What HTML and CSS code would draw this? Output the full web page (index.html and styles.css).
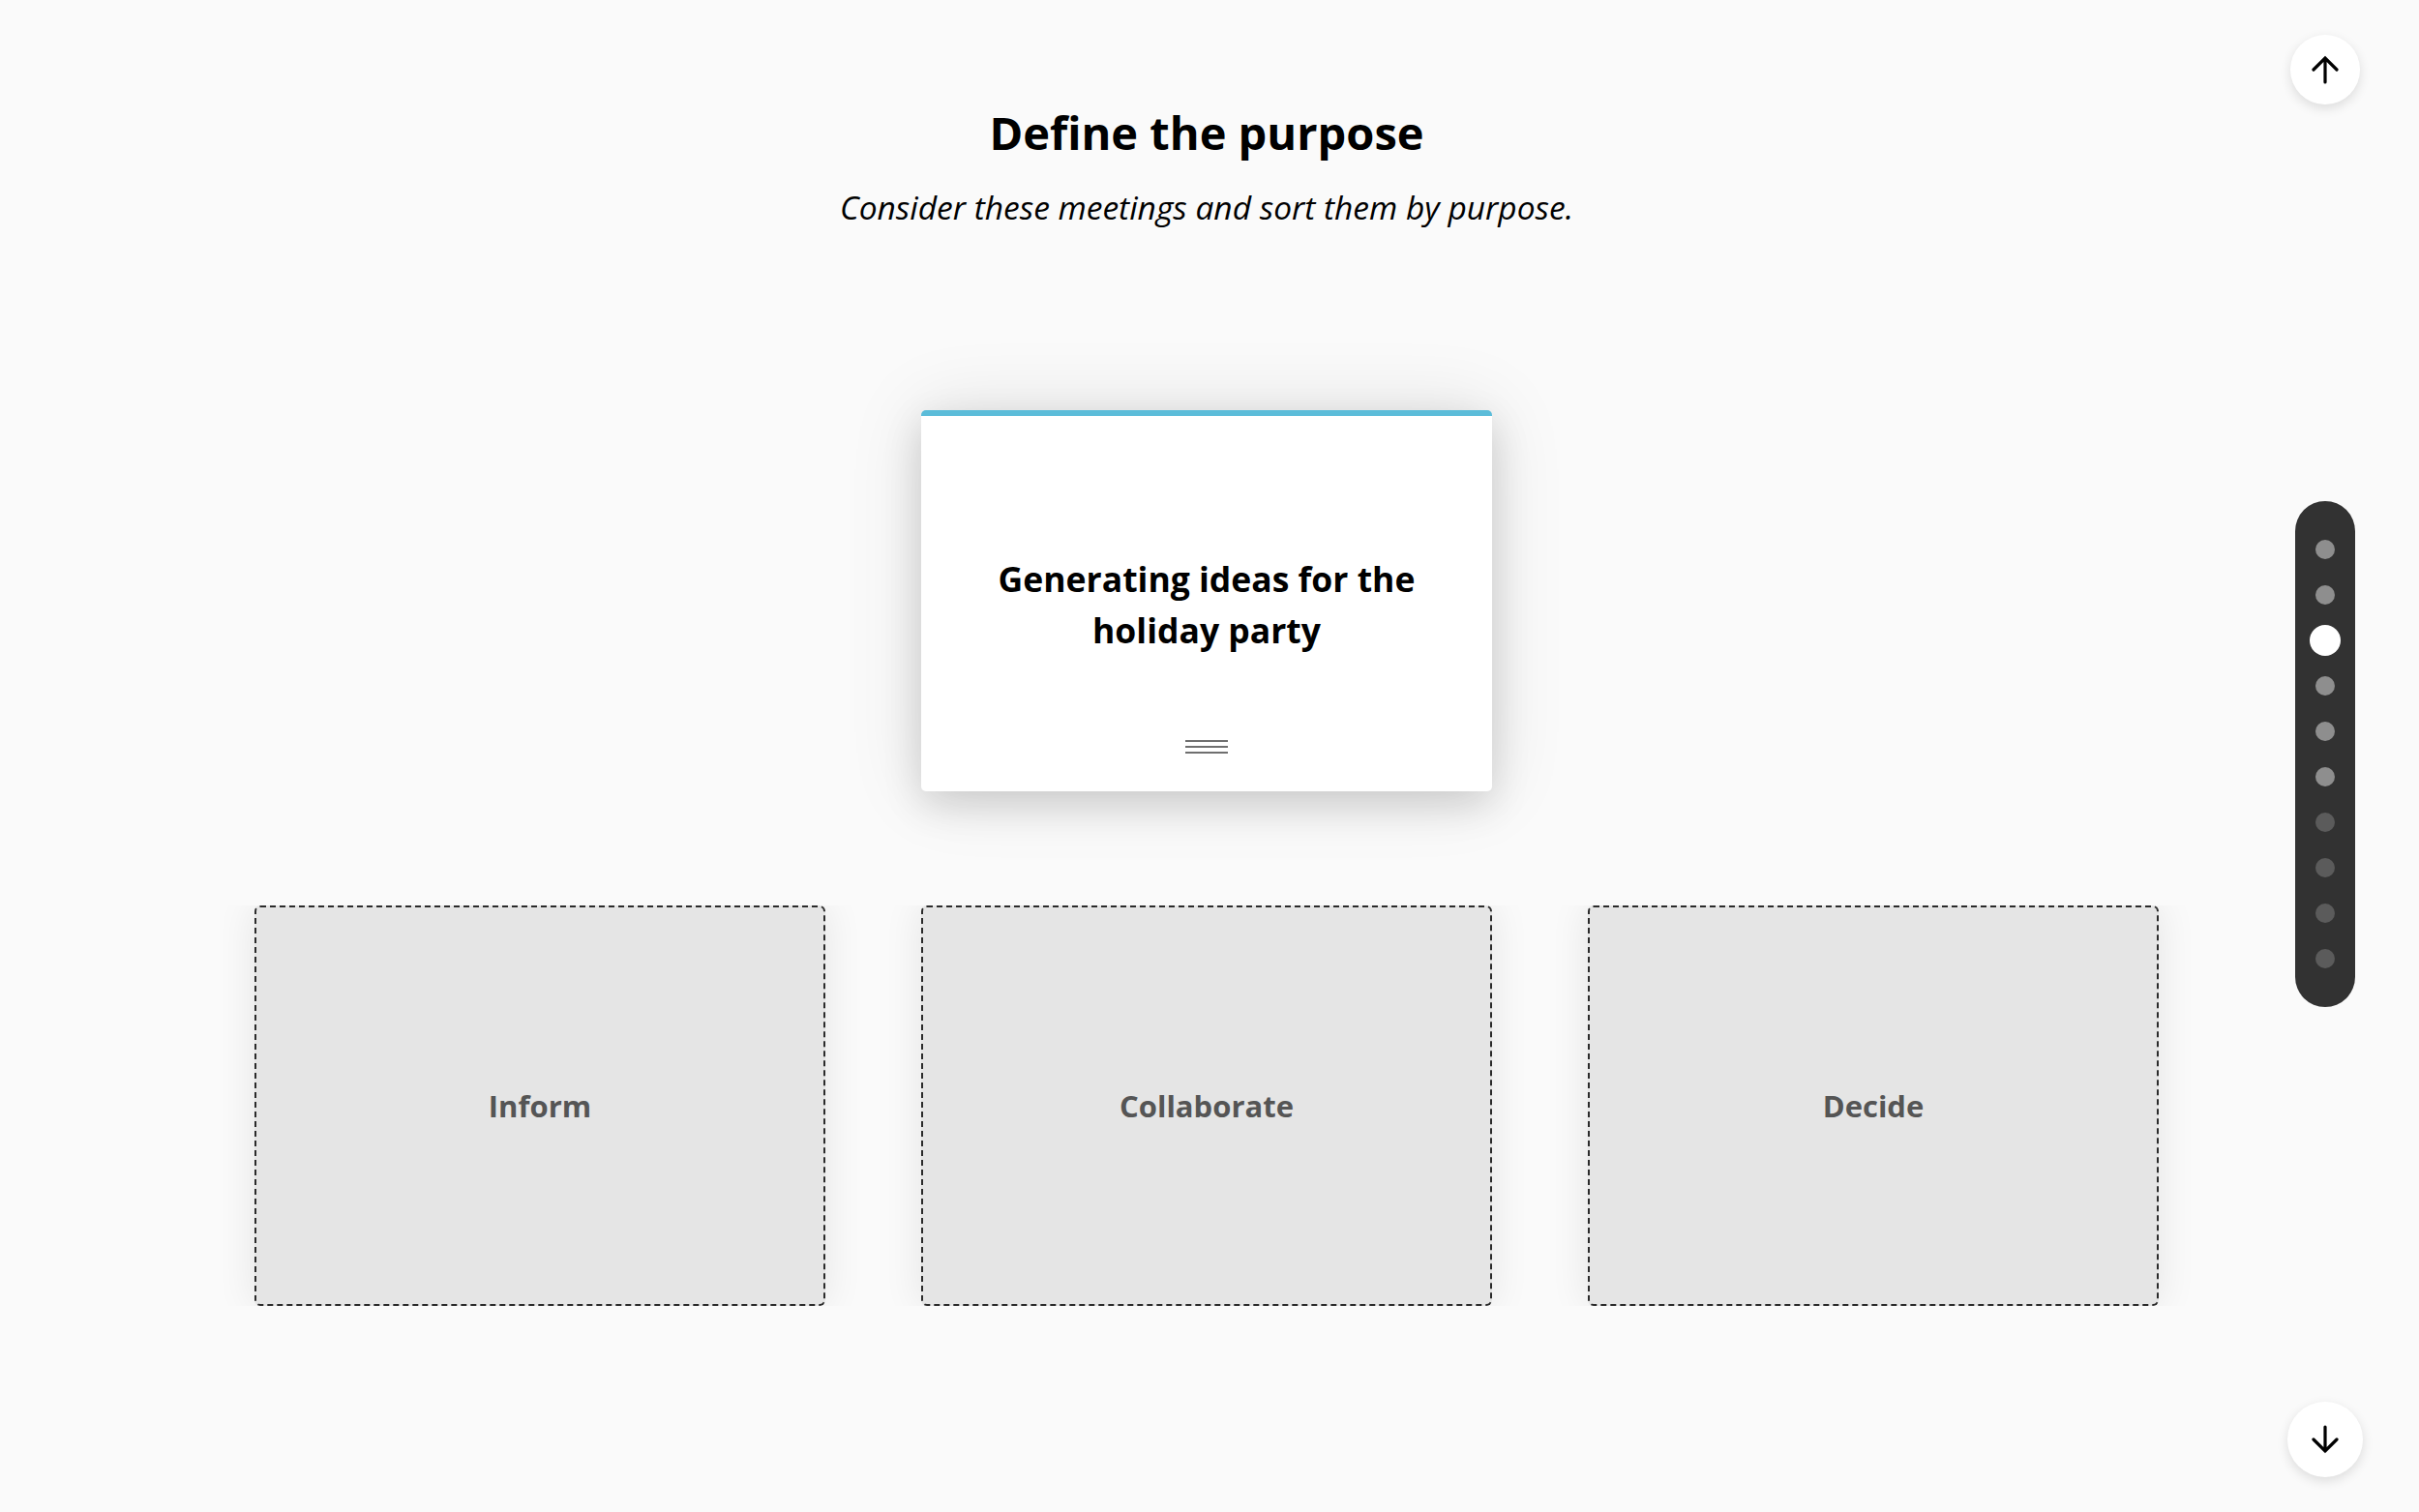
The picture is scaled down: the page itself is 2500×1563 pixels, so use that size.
FILE: index.html
```html
<!DOCTYPE html>
<html lang="en">
<head>
<meta charset="utf-8">
<title>Define the purpose</title>
<link rel="stylesheet" href="styles.css">
</head>
<body>
<main class="page">
  <header class="intro">
    <h1 class="title">Define the purpose</h1>
    <p class="subtitle">Consider these meetings and sort them by purpose.</p>
  </header>

  <section class="stage">
    <div class="card">
      <p class="card-text">Generating ideas for the holiday party</p>
      <span class="handle"><i></i><i></i><i></i></span>
    </div>
  </section>

  <section class="zones">
    <div class="zone"><span>Inform</span></div>
    <div class="zone"><span>Collaborate</span></div>
    <div class="zone"><span>Decide</span></div>
  </section>
</main>

<button class="nav-btn nav-up" aria-label="Previous">
  <svg width="28" height="30" viewBox="0 0 28 30"><path d="M14 3 V28 M2 15 L14 3 L26 15" fill="none" stroke="#000" stroke-width="3.2" stroke-linecap="round" stroke-linejoin="miter"/></svg>
</button>

<nav class="dots" aria-label="Sections">
  <span class="dot"></span>
  <span class="dot"></span>
  <span class="dot active"></span>
  <span class="dot"></span>
  <span class="dot"></span>
  <span class="dot"></span>
  <span class="dot dim"></span>
  <span class="dot dim"></span>
  <span class="dot dim"></span>
  <span class="dot dim"></span>
</nav>

<button class="nav-btn nav-down" aria-label="Next">
  <svg width="28" height="30" viewBox="0 0 28 30"><path d="M14 2 V27 M2 15 L14 27 L26 15" fill="none" stroke="#000" stroke-width="3.2" stroke-linecap="round" stroke-linejoin="miter"/></svg>
</button>
</body>
</html>
```

FILE: styles.css
```css
* { box-sizing: border-box; }

html, body {
  margin: 0;
  padding: 0;
  background: #fafafa;
  font-family: "Open Sans", "Noto Sans", sans-serif;
  color: #000;
}

.page {
  width: 2500px;
  padding: 107px 6px 0 0;
  display: flex;
  flex-direction: column;
  align-items: center;
}

.intro {
  display: flex;
  flex-direction: column;
  align-items: center;
}

.title {
  margin: 0;
  font-size: 47px;
  font-weight: 700;
  line-height: 60px;
}

.subtitle {
  margin: 25px 0 0;
  font-size: 33.5px;
  font-style: italic;
  font-weight: 400;
  line-height: 45px;
}

.stage {
  margin-top: 187px;
  display: flex;
  justify-content: center;
}

.card {
  position: relative;
  width: 590px;
  height: 394px;
  background: #fff;
  border-top: 6px solid #5bbcd9;
  border-radius: 5px;
  box-shadow: 0 14px 40px rgba(0, 0, 0, 0.14), 0 0 80px rgba(0, 0, 0, 0.11);
  display: flex;
  align-items: center;
  justify-content: center;
  padding: 0 56px;
}

.card-text {
  margin: 2px 0 0;
  font-size: 35.5px;
  font-weight: 700;
  line-height: 53px;
  text-align: center;
}

.handle {
  position: absolute;
  left: 50%;
  bottom: 39px;
  width: 44px;
  margin-left: -22px;
  display: flex;
  flex-direction: column;
  gap: 4px;
}

.handle i {
  display: block;
  height: 2px;
  background: #6f6f6f;
}

.zones {
  margin-top: 118px;
  padding: 0 50px;
  overflow: hidden;
  display: flex;
  gap: 99px;
}

.zone {
  width: 590px;
  height: 414px;
  background: #e5e5e5;
  border: 2px dashed #2b2b2b;
  border-radius: 6px;
  box-shadow: 0 0 40px rgba(0, 0, 0, 0.09);
  display: flex;
  align-items: center;
  justify-content: center;
}

.zone span {
  font-size: 31px;
  font-weight: 700;
  color: #555;
  line-height: 1;
}

.nav-btn {
  position: fixed;
  border: none;
  border-radius: 50%;
  background: #fff;
  box-shadow: 0 4px 12px rgba(0, 0, 0, 0.12);
  display: flex;
  align-items: center;
  justify-content: center;
  padding: 0;
  cursor: pointer;
}

.nav-up {
  width: 72px;
  height: 72px;
  left: 2367px;
  top: 36px;
}

.nav-down {
  width: 78px;
  height: 78px;
  left: 2364px;
  top: 1449px;
}

.dots {
  position: fixed;
  left: 2372px;
  top: 518px;
  width: 62px;
  height: 523px;
  padding: 26px 0;
  background: #323232;
  border-radius: 31px;
  display: flex;
  flex-direction: column;
  align-items: center;
}

.dot {
  height: 47px;
  display: flex;
  align-items: center;
}

.dot::before {
  content: "";
  width: 20px;
  height: 20px;
  border-radius: 50%;
  background: #8e8e8e;
}

.dot.dim::before { background: #5b5b5b; }

.dot.active::before {
  width: 32px;
  height: 32px;
  background: #fff;
}
```
